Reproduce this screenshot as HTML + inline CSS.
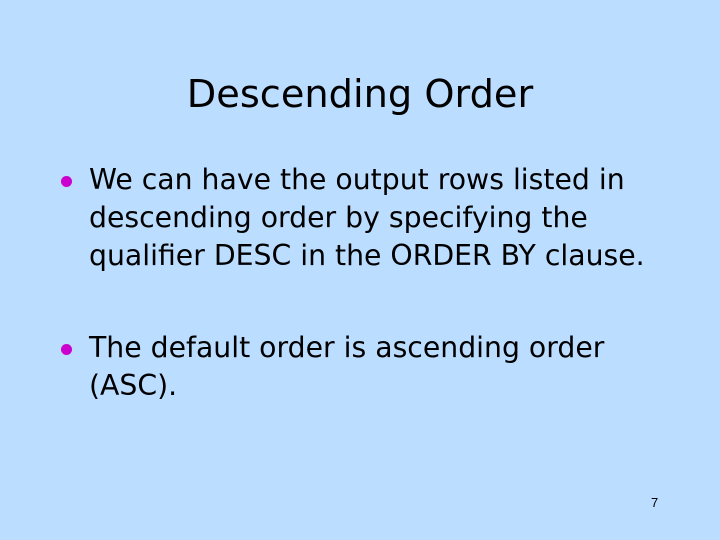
<!DOCTYPE html>
<html><head><style>
body{margin:0;width:720px;height:540px;background:#bbddff;position:relative;overflow:hidden;font-family:"DejaVu Sans",sans-serif;color:#000}
.t{position:absolute;left:0;width:720px;top:70px;text-align:center;font-size:38.3px;line-height:50px}
.b{position:absolute;left:89px;font-size:28.3px;line-height:38px;white-space:nowrap}
.d{position:absolute;width:11px;height:11px;border-radius:50%;background:#cc00cc}
.n{position:absolute;left:651px;top:495px;font-size:13px;font-family:"Liberation Sans",sans-serif}
</style></head><body>
<div class="t">Descending Order</div>
<div class="d" style="left:61px;top:176px"></div>
<div class="b" style="top:161px">We can have the output rows listed in<br>descending order by specifying the<br>qualifier DESC in the ORDER BY clause.</div>
<div class="d" style="left:61px;top:344px"></div>
<div class="b" style="top:329px">The default order is ascending order<br>(ASC).</div>
<div class="n">7</div>
</body></html>
